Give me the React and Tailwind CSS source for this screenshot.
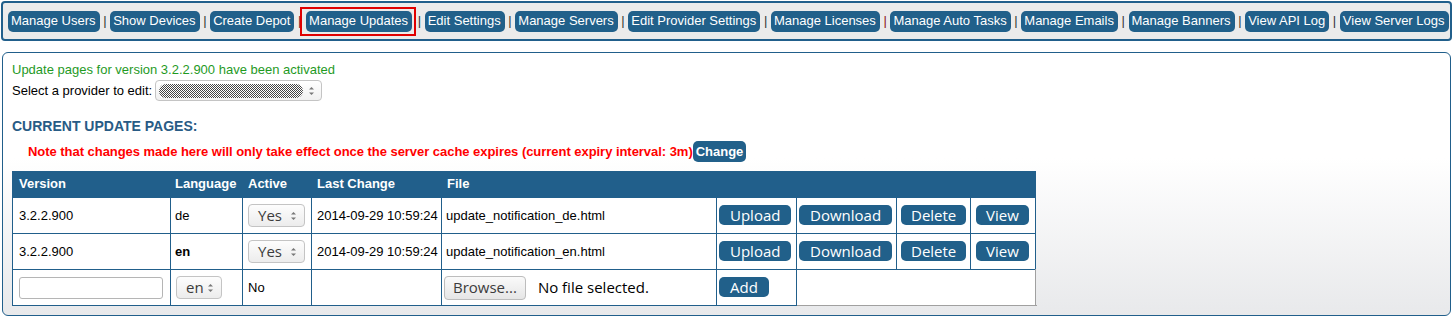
import React from 'react';

const navItems = [
  { label: 'Manage Users' },
  { label: 'Show Devices' },
  { label: 'Create Depot', sepRed: true },
  { label: 'Manage Updates', active: true },
  { label: 'Edit Settings' },
  { label: 'Manage Servers' },
  { label: 'Edit Provider Settings' },
  { label: 'Manage Licenses', sepRed: true },
  { label: 'Manage Auto Tasks' },
  { label: 'Manage Emails' },
  { label: 'Manage Banners' },
  { label: 'View API Log' },
  { label: 'View Server Logs' },
];

const rows = [
  { version: '3.2.2.900', lang: 'de', bold: false, file: 'update_notification_de.html' },
  { version: '3.2.2.900', lang: 'en', bold: true, file: 'update_notification_en.html' },
];

// little up/down arrows used on the native-looking selects
const Spinner = () => (
  <svg width="7" height="12" viewBox="0 0 7 12" className="ml-auto shrink-0">
    <path d="M1 4.5 L3.5 2 L6 4.5 Z" fill="#777" />
    <path d="M1 7.5 L3.5 10 L6 7.5 Z" fill="#777" />
  </svg>
);

const FakeSelect = ({ value, className }) => (
  <div
    className={`flex items-center h-[23px] pl-[9px] pr-[7px] rounded-[4px] border border-[#c4c4c4] bg-gradient-to-b from-[#fdfdfd] to-[#ececec] text-[15px] text-[#3c3c3c] font-['Open_Sans',sans-serif] ${className}`}
  >
    <span>{value}</span>
    <Spinner />
  </div>
);

const TableButton = ({ children, wide }) => (
  <button
    className={`h-[20px] ${wide ? 'px-[11px]' : 'px-[10px]'} rounded-[5px] bg-[#21608a] text-white text-[15px] leading-[20px] font-['Open_Sans',sans-serif]`}
  >
    {children}
  </button>
);

const cell = 'border border-[#215f8b]';

export default function App() {
  return (
    <div className="w-[1453px] h-[318px] bg-white p-px font-['Liberation_Sans',Arial,sans-serif] text-black">
      {/* Top navigation */}
      <div className="h-[40px] border-2 border-[#215f8b] rounded-[4px] bg-[#ebebeb] flex items-center pl-[5px] text-[13px] whitespace-pre">
        {navItems.map((item, i) => (
          <React.Fragment key={item.label}>
            <span className={item.active ? 'border-2 border-[#e00000] py-[2px] pl-[4px] pr-[2px] ml-[-5px] mr-[-2px]' : ''}>
              <span className="inline-flex items-center h-[21px] pl-[3px] pr-[4px] rounded-[5px] bg-[#21608a] text-white">
                {item.label}
              </span>
            </span>
            {i < navItems.length - 1 && (
              <span className={item.sepRed ? 'text-[#8b1a1a]' : 'text-[#333]'}>{' | '}</span>
            )}
          </React.Fragment>
        ))}
      </div>

      {/* Main panel */}
      <div className="mt-[11px] mx-px h-[264px] border border-[#215f8b] rounded-[6px] bg-gradient-to-b from-white from-40% to-[#e8e9eb] px-[9px] pt-[9px] text-[13px]">
        <div className="text-[#1f9a1f] leading-[15px]">Update pages for version 3.2.2.900 have been activated</div>
        <div className="flex items-center mt-[3px]">
          <span>Select a provider to edit:</span>
          <div className="ml-[3px] flex items-center w-[167px] h-[21px] pl-[3px] pr-[6px] rounded-[4px] border border-[#c4c4c4] bg-gradient-to-b from-white to-[#f0f0f0]">
            <span className="w-[144px] h-[14px] rounded-full bg-[repeating-conic-gradient(#444_0_25%,#fff_0_50%)] bg-[length:2px_2px]" />
            <Spinner />
          </div>
        </div>

        <div className="mt-[17px] text-[14px] font-bold text-[#285b85] leading-[16px]">CURRENT UPDATE PAGES:</div>

        <div className="flex items-center mt-[7px] pl-[16px]">
          <span className="font-bold text-[#ff0000] tracking-[-0.04px]">
            Note that changes made here will only take effect once the server cache expires (current expiry interval: 3m)
          </span>
          <button className="h-[21px] px-[3px] rounded-[5px] bg-[#21608a] text-white font-bold text-[13px]">Change</button>
        </div>

        <table className="mt-[9px] border-collapse table-fixed w-[1023px] text-[13px]">
          <thead>
            <tr className="bg-[#215f8b] text-white font-bold h-[26px] text-left">
              <th className={`w-[158px] pl-[6px] pb-[2px] ${cell}`}>Version</th>
              <th className={`w-[72px] pl-[4px] pb-[2px] ${cell}`}>Language</th>
              <th className={`w-[69px] pl-[5px] pb-[2px] ${cell}`}>Active</th>
              <th className={`w-[130px] pl-[5px] pb-[2px] ${cell}`}>Last Change</th>
              <th className={`w-[275px] pl-[5px] pb-[2px] ${cell}`}>File</th>
              <th className={`w-[80px] ${cell}`} />
              <th className={`w-[100px] ${cell}`} />
              <th className={`w-[74px] ${cell}`} />
              <th className={`w-[65px] ${cell}`} />
            </tr>
          </thead>
          <tbody>
            {rows.map((r) => (
              <tr key={r.lang} className="h-[36px] bg-white">
                <td className={`pl-[6px] ${cell}`}>{r.version}</td>
                <td className={`pl-[4px] ${cell} ${r.bold ? 'font-bold' : ''}`}>{r.lang}</td>
                <td className={`pl-[5px] ${cell}`}>
                  <FakeSelect value="Yes" className="w-[57px]" />
                </td>
                <td className={`pl-[5px] ${cell} whitespace-nowrap`}>2014-09-29 10:59:24</td>
                <td className={`pl-[4px] ${cell}`}>{r.file}</td>
                <td className={`pl-[2px] ${cell}`}><TableButton wide>Upload</TableButton></td>
                <td className={`pl-[2px] ${cell}`}><TableButton wide>Download</TableButton></td>
                <td className={`pl-[4px] ${cell}`}><TableButton>Delete</TableButton></td>
                <td className={`pl-[5px] ${cell}`}><TableButton>View</TableButton></td>
              </tr>
            ))}
            <tr className="h-[36px] bg-white">
              <td className={`pl-[6px] ${cell}`}>
                <div className="w-[144px] h-[22px] rounded-[3px] border border-[#b5b5b5] bg-white" />
              </td>
              <td className={`pl-[5px] ${cell}`}>
                <FakeSelect value="en" className="w-[46px] pl-[7px] pr-[5px]" />
              </td>
              <td className={`pl-[5px] ${cell}`}>No</td>
              <td className={cell} />
              <td className={`pl-[2px] ${cell}`}>
                <div className="flex items-center font-['Open_Sans',sans-serif] text-[15px]">
                  <span className="h-[24px] px-[8px] flex items-center rounded-[4px] border border-[#bdbdbd] bg-gradient-to-b from-[#fafafa] to-[#e6e6e6] text-[#3c3c3c]">
                    Browse...
                  </span>
                  <span className="ml-[12px]">No file selected.</span>
                </div>
              </td>
              <td className={`pl-[2px] ${cell}`}><TableButton wide>Add</TableButton></td>
              <td colSpan={4} className={`${cell} border-r-[#a0a0a0] border-b-[#a0a0a0]`} />
            </tr>
          </tbody>
        </table>
      </div>
    </div>
  );
}
